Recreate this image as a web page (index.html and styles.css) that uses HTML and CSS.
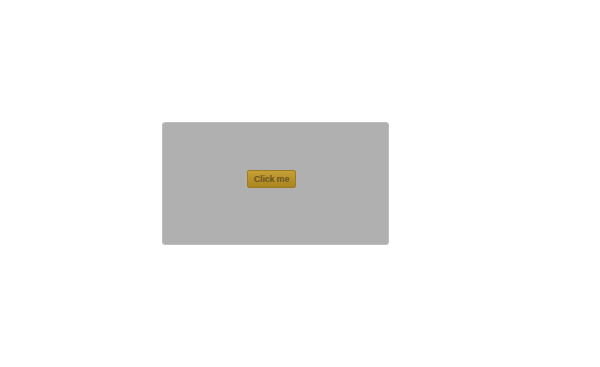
FILE: index.html
```html
<!DOCTYPE html>
<html>
<head>
<meta charset="utf-8">
<link rel="stylesheet" href="styles.css">
</head>
<body>
<div class="page">
  <div class="panel">
    <button class="btn">Click me</button>
  </div>
</div>
</body>
</html>
```
FILE: styles.css
```css
html, body {
  margin: 0;
  padding: 0;
  background: #ffffff;
}
.page {
  padding: 122px 0 0 162px;
}
.panel {
  box-sizing: border-box;
  width: 227px;
  height: 123px;
  background: #b0b0b0;
  border: 1px solid #bdbdbd;
  border-radius: 3px;
  padding: 47px 0 0 84px;
}
.btn {
  box-sizing: border-box;
  display: block;
  width: 49px;
  height: 18px;
  margin: 0;
  padding: 0;
  border: 1px solid #9c7c24;
  border-radius: 2px;
  background: linear-gradient(#c6a034, #aa841f);
  color: #6a5424;
  font-family: "Liberation Sans", Arial, sans-serif;
  font-weight: bold;
  font-size: 9px;
  letter-spacing: -0.2px;
  line-height: 16px;
  text-align: center;
}
```
